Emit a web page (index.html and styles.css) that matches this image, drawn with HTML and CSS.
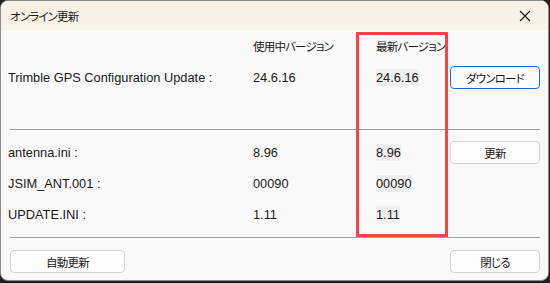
FILE: index.html
```html
<!DOCTYPE html>
<html lang="ja">
<head>
<meta charset="utf-8">
<link rel="stylesheet" href="styles.css">
</head>
<body>
<div class="window">
  <div class="titlebar">
    <span class="title">オンライン更新</span>
    <svg class="close" width="12" height="12" viewBox="0 0 12 12"><path d="M1 1L11 11M11 1L1 11" stroke="#1a1a1a" stroke-width="1.1"/></svg>
  </div>
  <div class="content">
    <div class="grid head">
      <span></span>
      <span class="jp">使用中バージョン</span>
      <span class="jp">最新バージョン</span>
      <span></span>
    </div>
    <div class="grid row1">
      <span>Trimble GPS Configuration Update :</span>
      <span>24.6.16</span>
      <span><span class="hl">24.6.16</span></span>
      <button class="btn primary jp">ダウンロード</button>
    </div>
    <div class="sep"></div>
    <div class="files">
      <div class="grid frow">
        <span>antenna.ini :</span>
        <span>8.96</span>
        <span><span class="hl">8.96</span></span>
        <button class="btn jp">更新</button>
      </div>
      <div class="grid frow">
        <span>JSIM_ANT.001 :</span>
        <span>00090</span>
        <span><span class="hl">00090</span></span>
        <span></span>
      </div>
      <div class="grid frow">
        <span>UPDATE.INI :</span>
        <span>1.11</span>
        <span><span class="hl">1.11</span></span>
        <span></span>
      </div>
    </div>
    <div class="sep sep2"></div>
    <div class="footer">
      <button class="btn wide jp">自動更新</button>
      <button class="btn jp">閉じる</button>
    </div>
  </div>
  <div class="mark"></div>
</div>
</body>
</html>
```
FILE: styles.css
```css
html, body {
  margin: 0;
  padding: 0;
  background: #202020;
}
body {
  width: 550px;
  height: 283px;
  overflow: hidden;
  font-family: "Liberation Sans", "Noto Sans CJK JP", sans-serif;
  font-size: 12.8px;
  color: #1a1a1a;
}
.jp,
.title {
  font-family: "Noto Sans CJK JP", sans-serif;
  font-size: 11.5px;
  letter-spacing: -0.8px;
  font-feature-settings: "palt";
}
.window {
  position: relative;
  box-sizing: border-box;
  width: 549px;
  height: 281px;
  border: 1px solid #8c8c8c;
  border-radius: 8px;
  background: #f9f9f9;
  overflow: hidden;
}
.titlebar {
  height: 29px;
  background: #f8f1e8;
  display: flex;
  align-items: center;
  justify-content: space-between;
  padding: 0 17px 0 9px;
}
.title { line-height: 14px; }
.content {
  padding: 8px 7px 0 7px;
}
.grid {
  display: grid;
  grid-template-columns: 245px 123px 74px 90px;
  align-items: center;
  white-space: nowrap;
}
.head {
  height: 16px;
  line-height: 16px;
}
.row1 {
  margin-top: 12px;
  height: 23px;
}
.hl {
  background: #efefef;
  padding: 1px 0;
}
.btn {
  box-sizing: border-box;
  height: 23px;
  width: 90px;
  border: 1px solid #d3d3d3;
  border-radius: 4px;
  background: #fdfdfd;
  color: #1a1a1a;
  padding: 0;
  margin: 0;
}
.btn.primary {
  border-color: #1a6fc4;
}
.btn.wide {
  width: 115px;
}
.sep {
  margin: 40px 1px 0 2px;
  height: 1px;
  background: #a0a0a0;
}
.files {
  padding-top: 11px;
}
.frow {
  height: 31px;
}
.frow:first-child { height: 23px; margin-bottom: 4px; }
.sep2 {
  margin-top: 7px;
}
.footer {
  display: flex;
  justify-content: space-between;
  margin: 12px 1px 0 2px;
}
.mark {
  position: absolute;
  left: 355px;
  top: 31px;
  width: 86px;
  height: 199px;
  border: 3px solid #f04549;
}
```
